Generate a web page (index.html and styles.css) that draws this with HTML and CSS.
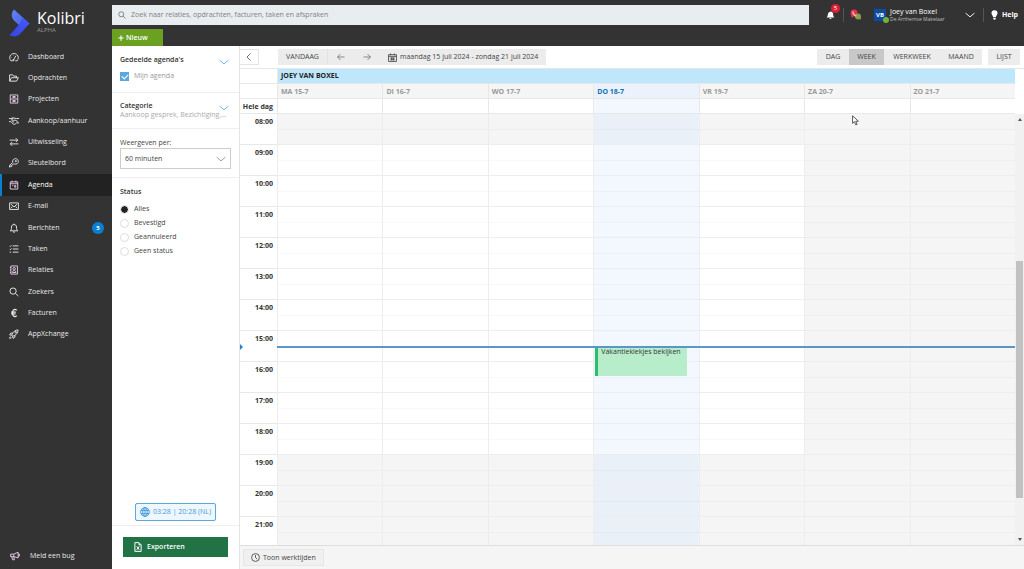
FILE: index.html
```html
<!DOCTYPE html>
<html lang="nl">
<head>
<meta charset="utf-8">
<meta name="viewport" content="width=device-width, initial-scale=1">
<title>Kolibri - Agenda</title>
<link rel="stylesheet" href="styles.css">
</head>
<body>
<div class="app">
  <aside class="sidebar">
    <a class="brand" href="#">
      <svg class="brand-mark" viewBox="0 0 22 28" aria-hidden="true">
        <defs>
          <linearGradient id="markTop" x1="0" y1="0" x2="1" y2="1"><stop offset="0" stop-color="#6385f5"/><stop offset="1" stop-color="#3f5be8"/></linearGradient>
          <linearGradient id="markLow" x1="0" y1="1" x2="1" y2="0"><stop offset="0" stop-color="#3344e0"/><stop offset="1" stop-color="#4858ff"/></linearGradient>
        </defs>
        <path d="M5 0.5 L20.500 14.500 L13 19 L5 11.500 C2 8 2 4 5 0.500Z" fill="url(#markTop)"/>
        <path d="M13.500 9 L20.500 14.500 L11 25 C8 28 4 28 0.500 26.200 L11 14.500Z" fill="url(#markLow)"/>
      </svg>
      <span class="brand-text"><span class="brand-name">Kolibri</span><span class="brand-stage">ALPHA</span></span>
    </a>
    <nav class="nav">
      <a class="nav-item" href="#"><svg class="icon" viewBox="0 0 16 16"><path d="M3 14C-1 9 2 2.500 8 2.500S17 9 13 14H10M3 14H6"/><path d="M7 13 11 6"/><circle cx="7" cy="13" r="1"/><path d="M4 8v.5M7 5.500v.5"/></svg>Dashboard</a>
      <a class="nav-item" href="#"><svg class="icon" viewBox="0 0 16 16"><path d="M1 13V3h5l1.500 2H12v2.500M1 13 4 7.500h11L12 13z"/></svg>Opdrachten</a>
      <a class="nav-item" href="#"><svg class="icon pink" viewBox="0 0 16 16"><path d="M2 1.500h12v13H2zM2 8h12M6 4h4v1.500H6zM6 10.500h4V12H6z"/></svg>Projecten</a>
      <a class="nav-item" href="#"><svg class="icon" viewBox="0 0 16 16"><path d="M0 4h3l3-1 6 1h4M0 9h3l4 4c2 1 3 0 5-2h4M5 6c3 2 4 0 6 1l3 2M4 7l4 3M6 3 4 6"/></svg>Aankoop/aanhuur</a>
      <a class="nav-item" href="#"><svg class="icon" viewBox="0 0 16 16"><path d="M1 5h13M11 2l3 3-3 3M15 11H2M5 8l-3 3 3 3"/></svg>Uitwisseling</a>
      <a class="nav-item" href="#"><svg class="icon" viewBox="0 0 16 16"><path d="M7 9.500 2 14.500H.8V12L6 7C5 3 8 1 10.500 1 13 1 15 3 15 5.500 15 8 12 11 8.500 9.500zM2.500 12l2 2"/><circle cx="11" cy="5" r="1"/></svg>Sleutelbord</a>
      <a class="nav-item active" href="#" aria-current="page"><svg class="icon pink" viewBox="0 0 16 16"><path d="M2 3h12v11.500H2zM2 6h12M5 1v3M11 1v3M5 9h2M9 9h2v2.500H9z"/></svg>Agenda</a>
      <a class="nav-item" href="#"><svg class="icon" viewBox="0 0 16 16"><path d="M1 3h14v10.500H1zM3 5l5 4.500L13 5M3 11.500 5.500 9M13 11.500 10.500 9"/></svg>E-mail</a>
      <a class="nav-item" href="#"><svg class="icon" viewBox="0 0 16 16"><path d="M2 12.500c2-2 2-3 2-6C4 3.500 6 2.500 8 2.500s4 1 4 4c0 3 0 4 2 6zM6.500 14.500h3M8 1v1.500"/></svg>Berichten<span class="count">5</span></a>
      <a class="nav-item" href="#"><svg class="icon" viewBox="0 0 16 16"><path d="M6 3h9M6 8h9M6 13h9M1 3l1 1 2-2M1 8l1 1 2-2M1 13h2.500"/></svg>Taken</a>
      <a class="nav-item" href="#"><svg class="icon pink" viewBox="0 0 16 16"><path d="M3 1.500h10.500v13H3zM1.500 4H3M1.500 8H3M1.500 12H3M5.500 12c0-4 5.500-4 5.500 0z"/><circle cx="8.300" cy="6" r="2"/></svg>Relaties</a>
      <a class="nav-item" href="#"><svg class="icon" viewBox="0 0 16 16"><circle cx="6.500" cy="6.500" r="5"/><path d="m10.300 10.300 4.700 4.200"/></svg>Zoekers</a>
      <a class="nav-item" href="#"><svg class="icon euro" viewBox="0 0 16 16"><path d="M12.500 3.500C8 .5 5.500 4 5.500 8s2.500 7.500 7 4.500M3.500 6.500H11M3.500 9.500H10.500"/></svg>Facturen</a>
      <a class="nav-item" href="#"><svg class="icon" viewBox="0 0 16 16"><path d="M5 9C7 4 10 1.500 14.500 1.500 14.500 6 12 9 7.500 11.500zM6 6.500H3L1 9.500l4 .5M9.500 10v3l-3 2-1-4M2 12l-1 3 3-1"/><circle cx="10.800" cy="5.200" r="1.200"/></svg>AppXchange</a>
    </nav>
    <a class="nav-item report" href="#"><svg class="icon pink" viewBox="0 0 16 16"><path d="M1 5h5l7-3v9L6 9H1zM3 9l1 5h3L6 9M13 5h2v3h-2M6 5v4"/></svg>Meld een bug</a>
  </aside>

  <div class="main">
    <header class="topbar">
      <div class="top-left">
        <label class="search"><svg class="icon" viewBox="0 0 16 16"><circle cx="6.500" cy="6.500" r="5"/><path d="m10.300 10.300 4.700 4.700"/></svg><input type="search" aria-label="Zoeken" placeholder="Zoek naar relaties, opdrachten, facturen, taken en afspraken"></label>
        <button class="new" type="button"><svg class="icon" viewBox="0 0 16 16"><path d="M8 1v14M1 8h14"/></svg>Nieuw</button>
      </div>
      <div class="top-right">
        <button class="bell" type="button" aria-label="Meldingen"><svg viewBox="0 0 16 16"><path d="M1 12.500c2-2 2-3 2.300-6C3.600 3.500 6 2.500 8 2s4.400 1.500 4.700 4.500c.3 3 .3 4 2.300 6zM6 13.500h4c-.5 2-3.500 2-4 0z"/></svg><span class="alert">5</span></button>
        <span class="rule"></span>
        <svg class="chat" viewBox="0 0 24 24" role="img" aria-label="Bellen"><circle cx="8" cy="8" r="7" fill="#e5334e"/><path d="m4 12-2 5 6-2z" fill="#e5334e"/><circle cx="16" cy="15" r="6" fill="#8b9d46"/><path d="m18 19 4 3-1-6z" fill="#8b9d46"/><path d="M6 5c0 5 3 8 7 9" fill="none" stroke="#f5b7ac" stroke-width="3"/></svg>
        <button class="user" type="button">
          <span class="avatar">VB<span class="online"></span></span>
          <span class="user-text"><span class="user-name">Joey van Boxel</span><span class="user-org">De Arnhemse Makelaar</span></span>
          <svg class="icon chevron" viewBox="0 0 16 16"><path d="m1 5 7 6 7-6"/></svg>
        </button>
        <span class="rule"></span>
        <a class="help" href="#"><svg viewBox="0 0 12 16"><path d="M6 0a5.200 5.200 0 0 0-5.200 5.200C.8 8 3.500 9 3.500 12h5c0-3 2.700-4 2.700-6.800A5.200 5.200 0 0 0 6 0zM3.800 13h4.400v1.500L7 16H5l-1.200-1.500z"/></svg>Help</a>
      </div>
    </header>

    <div class="workspace">
      <section class="filters">
        <div class="group shared">
          <div class="group-head"><h2>Gedeelde agenda's</h2><svg class="icon blue" viewBox="0 0 16 16"><path d="m1 5 7 6 7-6"/></svg></div>
          <label class="check"><input type="checkbox" checked>Mijn agenda</label>
        </div>
        <div class="group category">
          <div class="group-head"><h2>Categorie</h2><svg class="icon blue" viewBox="0 0 16 16"><path d="m1 5 7 6 7-6"/></svg></div>
          <p class="hint">Aankoop gesprek, Bezichtiging,...</p>
        </div>
        <div class="group interval">
          <label for="interval">Weergeven per:</label>
          <div class="select-wrap"><select id="interval"><option>60 minuten</option><option>30 minuten</option></select><svg class="icon" viewBox="0 0 16 16"><path d="m1 5 7 6 7-6"/></svg></div>
        </div>
        <fieldset class="group status">
          <legend>Status</legend>
          <label><input type="radio" name="status" checked>Alles</label>
          <label><input type="radio" name="status">Bevestigd</label>
          <label><input type="radio" name="status">Geannuleerd</label>
          <label><input type="radio" name="status">Geen status</label>
        </fieldset>
        <div class="clock"><svg class="icon" viewBox="0 0 16 16"><circle cx="8" cy="8" r="7"/><ellipse cx="8" cy="8" rx="3.500" ry="7"/><path d="M1.500 5.500h13M1.500 10.500h13M8 1v14"/></svg>03:28 | 20:28 (NL)</div>
        <div class="export-wrap"><button class="export" type="button"><svg viewBox="0 0 12 16"><path d="M1 1h6.500L11 4.500V15H1z" fill="none" stroke="#fff" stroke-width="1.600"/><path d="M7 1v4h4" fill="#fff"/><path d="m4 7 4 5.500M8 7l-4 5.500" stroke="#fff" stroke-width="1.600"/></svg>Exporteren</button></div>
      </section>

      <section class="calendar">
        <div class="toolbar">
          <button class="collapse" type="button" aria-label="Filters verbergen"><svg class="icon" viewBox="0 0 16 16"><path d="M11 1 4 8l7 7"/></svg></button>
          <div class="nav-dates">
            <button class="tool today-btn" type="button">VANDAAG</button>
            <button class="tool arrow" type="button" aria-label="Vorige week"><svg class="icon" viewBox="0 0 16 16"><path d="M15 8H1M7 2 1 8l6 6"/></svg></button>
            <button class="tool arrow" type="button" aria-label="Volgende week"><svg class="icon" viewBox="0 0 16 16"><path d="M1 8h14M9 2l6 6-6 6"/></svg></button>
            <button class="tool range" type="button"><svg class="icon" viewBox="0 0 16 16"><path d="M1 3h14v12H1zM1 6h14M4.500 1v3M11.500 1v3M4 9h8M4 12h8M6.500 8v5M9.500 8v5"/></svg>maandag 15 juli 2024 - zondag 21 juli 2024</button>
          </div>
          <div class="views">
            <button class="tool day" type="button">DAG</button>
            <button class="tool week" type="button" aria-pressed="true">WEEK</button>
            <button class="tool workweek" type="button">WERKWEEK</button>
            <button class="tool month" type="button">MAAND</button>
          </div>
          <button class="tool list" type="button">LIJST</button>
        </div>

        <div class="heads-wrap">
          <table class="grid heads">
            <colgroup><col class="time-col"><col span="7"></colgroup>
            <thead>
              <tr class="owner"><td></td><th colspan="7">JOEY VAN BOXEL</th></tr>
              <tr class="days"><td></td><th>MA 15-7</th><th>DI 16-7</th><th>WO 17-7</th><th class="today">DO 18-7</th><th>VR 19-7</th><th>ZA 20-7</th><th>ZO 21-7</th></tr>
            </thead>
            <tbody><tr class="allday"><th>Hele dag</th><td></td><td></td><td></td><td class="today"></td><td></td><td></td><td></td></tr></tbody>
          </table>
        </div>

        <div class="body">
          <div class="viewport">
            <table class="grid hours">
              <colgroup><col class="time-col"><col span="7"></colgroup>
              <tbody>
                <tr class="off"><th>08:00</th><td></td><td></td><td></td><td></td><td></td><td></td><td></td></tr>
                <tr><th>09:00</th><td></td><td></td><td></td><td></td><td></td><td></td><td></td></tr>
                <tr><th>10:00</th><td></td><td></td><td></td><td></td><td></td><td></td><td></td></tr>
                <tr><th>11:00</th><td></td><td></td><td></td><td></td><td></td><td></td><td></td></tr>
                <tr><th>12:00</th><td></td><td></td><td></td><td></td><td></td><td></td><td></td></tr>
                <tr><th>13:00</th><td></td><td></td><td></td><td></td><td></td><td></td><td></td></tr>
                <tr><th>14:00</th><td></td><td></td><td></td><td></td><td></td><td></td><td></td></tr>
                <tr class="now"><th>15:00</th><td></td><td></td><td></td><td><div class="event">Vakantiekiekjes bekijken</div></td><td></td><td></td><td></td></tr>
                <tr><th>16:00</th><td></td><td></td><td></td><td></td><td></td><td></td><td></td></tr>
                <tr><th>17:00</th><td></td><td></td><td></td><td></td><td></td><td></td><td></td></tr>
                <tr><th>18:00</th><td></td><td></td><td></td><td></td><td></td><td></td><td></td></tr>
                <tr class="off"><th>19:00</th><td></td><td></td><td></td><td></td><td></td><td></td><td></td></tr>
                <tr class="off"><th>20:00</th><td></td><td></td><td></td><td></td><td></td><td></td><td></td></tr>
                <tr class="off"><th>21:00</th><td></td><td></td><td></td><td></td><td></td><td></td><td></td></tr>
              </tbody>
            </table>
          </div>
          <div class="scrollbar" aria-hidden="true"><span class="up"></span><span class="thumb"></span><span class="down"></span></div>
        </div>

        <footer class="cal-foot"><button class="tool hours-btn" type="button"><svg class="icon" viewBox="0 0 16 16"><circle cx="8" cy="8" r="7"/><path d="M8 3.500V8l3 3"/></svg>Toon werktijden</button></footer>
      </section>
    </div>
  </div>
  <svg class="pointer" viewBox="0 0 12 18" aria-hidden="true"><path d="M1 1v13l3.200-3 2.300 5.500 2.300-1-2.300-5.300H11z"/></svg>
</div>
</body>
</html>
```
FILE: styles.css
```css
* { box-sizing: border-box; }
body {
  margin: 0;
  font: 7px/10px "Open Sans", "Noto Sans", sans-serif;
  color: #444;
  background: #fff;
}
button, input, select { font: inherit; color: inherit; margin: 0; border: 0; border-radius: 0; background: none; padding: 0; }
h2, p { margin: 0; font-size: inherit; }
a { color: inherit; text-decoration: none; }
.app { display: flex; height: 100vh; overflow: hidden; }
.icon { width: 10px; height: 10px; flex: none; fill: none; stroke: currentColor; stroke-width: 1.5; }

/* Sidebar */
.sidebar { width: 112px; flex: none; display: flex; flex-direction: column; background: #333; color: #e8e8e8; }
.brand { display: flex; gap: 6px; height: 46px; padding: 9px 0 0 9px; }
.brand-mark { width: 22px; height: 28px; }
.brand-text { display: flex; flex-direction: column; }
.brand-name { font-size: 16px; line-height: 18px; color: #fff; }
.brand-stage { font-size: 6px; line-height: 7px; color: #999; }
.nav { display: flex; flex-direction: column; min-height: 299px; }
.nav-item { display: flex; flex: 1; align-items: center; gap: 9px; padding-left: 9px; }
.nav .active { background: #222; border-left: 2px solid #0b7fd0; padding-left: 7px; color: #fff; }
.pink { color: #e6cbe6; }
.icon.euro { stroke-width: 2; }
.count { margin-left: auto; margin-right: 8px; width: 12px; height: 12px; border-radius: 50%; background: #0b7fd0; color: #fff; text-align: center; line-height: 12px; font-weight: 700; font-size: 6px; }
.report { flex: none; height: 22px; margin-top: auto; margin-bottom: 2px; padding-left: 10px; gap: 10px; }

/* Top bar */
.main { flex: 1; min-width: 0; display: flex; flex-direction: column; }
.topbar { display: flex; height: 46px; flex: none; background: #333; color: #fff; }
.top-left { flex: 1; display: flex; flex-direction: column; align-items: flex-start; justify-content: space-between; padding-top: 5px; }
.search { display: flex; align-items: center; gap: 4px; width: 100%; height: 20px; padding-left: 6px; background: #e8edf0; color: #666; }
.search .icon { width: 8px; height: 8px; }
.search input { flex: 1; outline: 0; padding-left: 1px; }
.search input::placeholder { color: #808080; opacity: 1; }
.new { display: flex; align-items: center; gap: 2px; width: 51px; height: 17px; padding-left: 6px; background: #6aa120; font-weight: 600; }
.new .icon { width: 6px; height: 6px; stroke-width: 3; }
.top-right { display: flex; align-items: center; height: 30px; padding-left: 17px; width: 215px; }
.bell { position: relative; width: 9px; height: 10px; }
.bell svg { display: block; width: 9px; height: 10px; fill: #fff; }
.alert { position: absolute; left: 5px; top: -6px; width: 9px; height: 9px; border-radius: 50%; background: #dc1f32; font-size: 6px; line-height: 9px; text-align: center; }
.rule { width: 1px; height: 14px; background: #555; margin-left: 8px; }
.chat { width: 12px; height: 12px; margin-left: 6px; }
.user { display: flex; align-items: center; gap: 4px; flex: 1; margin-left: 12px; text-align: left; }
.avatar { position: relative; width: 12px; height: 12px; background: #0c4ca3; font-weight: 700; font-size: 6px; line-height: 12px; text-align: center; }
.online { position: absolute; right: -3px; bottom: -2px; width: 6px; height: 6px; border-radius: 50%; background: #6db33f; }
.user-text { display: flex; flex-direction: column; flex: 1; }
.user-name { line-height: 8px; }
.user-org { font-size: 5px; line-height: 6px; color: #bbb; }
.help { display: flex; align-items: center; gap: 4px; margin: 0 6px 0 7px; font-weight: 700; }
.help svg { width: 7px; height: 10px; fill: #fff; }

/* Filter panel */
.workspace { flex: 1; min-height: 0; display: flex; }
.filters { width: 128px; flex: none; display: flex; flex-direction: column; border-right: 1px solid #e4e4e4; }
.group { padding: 0 8px; border-bottom: 1px solid #eee; }
.group h2 { font-weight: 600; color: #333; }
.group-head { display: flex; justify-content: space-between; padding-right: 2px; }
.group-head .icon { margin-top: 2px; }
.blue { color: #5eb1de; }
.shared { height: 47px; padding-top: 9px; }
.check { display: flex; align-items: center; gap: 5px; margin-top: 4px; color: #999; }
.check input { appearance: none; width: 9px; height: 9px; background: #5aa9dd; display: grid; place-items: center; }
.check input::after { content: ""; width: 5px; height: 3px; border: solid #fff; border-width: 0 0 1px 1px; rotate: -45deg; }
.category { height: 36px; padding-top: 8px; }
.hint { margin-top: -2px; color: #aaa; line-height: 8px; white-space: nowrap; }
.interval { height: 49px; padding-top: 9px; }
.interval label { display: block; }
.select-wrap { display: grid; align-items: center; }
.select-wrap > * { grid-area: 1 / 1; }
.select-wrap .icon { justify-self: end; margin-right: 5px; color: #999; pointer-events: none; }
.interval select { appearance: none; height: 21px; border: 1px solid #ccc; padding: 0 4px; }
.status { border: 0; margin: 0; padding-top: 9px; min-width: 0; display: flex; flex-direction: column; }
.status legend { float: left; padding: 0; margin-bottom: 5px; color: #333; font-weight: 600; }
.status label { display: flex; align-items: center; gap: 5px; height: 14px; }
.status input { appearance: none; width: 9px; height: 9px; border: 1px solid #ddd; border-radius: 50%; }
.status input:checked { background: radial-gradient(circle, #222 3px, #fff 4px); }
.clock { display: flex; align-items: center; gap: 3px; align-self: center; height: 18px; margin-top: auto; padding: 0 4px; border: 1px solid #5ba7df; border-radius: 2px; background: #eef7fd; color: #459bd9; }
.export-wrap { margin-top: 4px; border-top: 1px solid #eee; padding: 11px 11px 12px; }
.export { display: flex; align-items: center; gap: 5px; width: 100%; height: 20px; padding-left: 11px; background: #217346; color: #fff; font-weight: 600; }
.export svg { width: 8px; height: 10px; }

/* Calendar toolbar */
.calendar { flex: 1; min-width: 0; display: flex; flex-direction: column; }
.toolbar { display: flex; align-items: center; height: 23px; flex: none; padding-right: 4px; border-bottom: 1px solid #e6e6e6; }
.collapse { width: 19px; height: 16px; border: 1px solid #e4e4e4; border-left: 0; display: grid; place-items: center; }
.collapse .icon { width: 8px; height: 8px; }
.tool { display: flex; align-items: center; justify-content: center; gap: 3px; height: 16px; background: #ececec; color: #444; }
.tool .icon { width: 9px; height: 9px; }
.nav-dates { display: flex; margin-left: 19px; }
.today-btn { width: 50px; border-right: 1px solid #e4e4e4; }
.arrow { width: 26px; color: #666; }
.tool.arrow .icon { width: 8px; height: 8px; }
.range { padding: 0 8px; }
.views { display: flex; margin-left: auto; }
.day { width: 32px; }
.week { width: 35px; background: #c8c8c8; }
.workweek { width: 56px; }
.month { width: 42px; }
.list { width: 32px; margin-left: 6px; }

/* Calendar tables */
.grid { width: 100%; table-layout: fixed; border-collapse: separate; border-spacing: 0; }
.time-col { width: 37px; }
.grid th, .grid td { padding: 0; border: solid #e8e8e8; border-width: 0 0 1px 1px; }
.grid tr > :first-child { border-left: 0; background: #fff; }
.grid th { font-weight: 700; text-align: left; }
.heads-wrap { flex: none; padding-right: 9px; }
.heads th, .heads td { height: 15px; padding-top: 1px; }
.heads .owner th { background: #bfe7fc; color: #222; padding-left: 3px; padding-top: 0; }
.heads .days th { background: #f5f5f5; color: #999; padding-left: 3px; }
.heads .days .today { color: #0b72b9; background: #ecf2fb; }
.allday .today { background: #f3f8fe; }
.allday th, .hours th { color: #333; }
.grid .allday th, .grid.hours th { text-align: right; padding-right: 4px; }
.body { flex: 1; min-height: 0; display: flex; }
.viewport { flex: 1; min-width: 0; overflow: hidden; }
.hours th, .hours td { height: 31px; vertical-align: top; }
.grid.hours th { padding-top: 3px; }
.grid.hours td { border-color: #ededed; }
.hours td { background: linear-gradient(#00000007, #00000007) 0 15px / 100% 1px no-repeat #fff; }
.hours td:nth-child(5) { background-color: #f3f8fe; }
.hours td:nth-child(n+7), .hours .off td { background-color: #f5f5f5; }
.hours .off td:nth-child(5) { background-color: #eaf0f8; }
.now td, .now th { position: relative; }
.now td::after { content: ""; position: absolute; left: -1px; right: 0; top: 15px; height: 2px; background: #5a97c6; z-index: 2; }
.now th::after { content: ""; position: absolute; left: 0; top: 13px; border: solid transparent; border-width: 3px 0 3px 3px; border-left-color: #2485c7; }
.event { position: absolute; z-index: 1; left: 1px; right: 12px; top: 15px; height: 30px; padding-left: 3px; border-left: 3px solid #2dbd6e; background: #b8edcc; color: #333; line-height: 12px; white-space: nowrap; }
.scrollbar { width: 9px; flex: none; display: flex; flex-direction: column; align-items: center; justify-content: space-between; padding: 4px 1px; background: #f1f1f1; position: relative; }
.thumb { position: absolute; left: 1px; right: 1px; top: 34%; height: 55%; background: #c1c1c1; }
.up, .down { border: solid transparent; border-width: 0 2px 3px; border-bottom-color: #555; }
.down { rotate: 180deg; }
.cal-foot { height: 24px; flex: none; padding: 3px; border-top: 1px solid #ddd; background: #f5f5f5; }
.hours-btn { border: 1px solid #e6e6e6; padding: 0 7px; height: 17px; background: #f0f0f0; }

.pointer { position: absolute; left: 852px; top: 115px; width: 7px; height: 11px; fill: #fff; stroke: #444; stroke-width: 1.5; }
```
